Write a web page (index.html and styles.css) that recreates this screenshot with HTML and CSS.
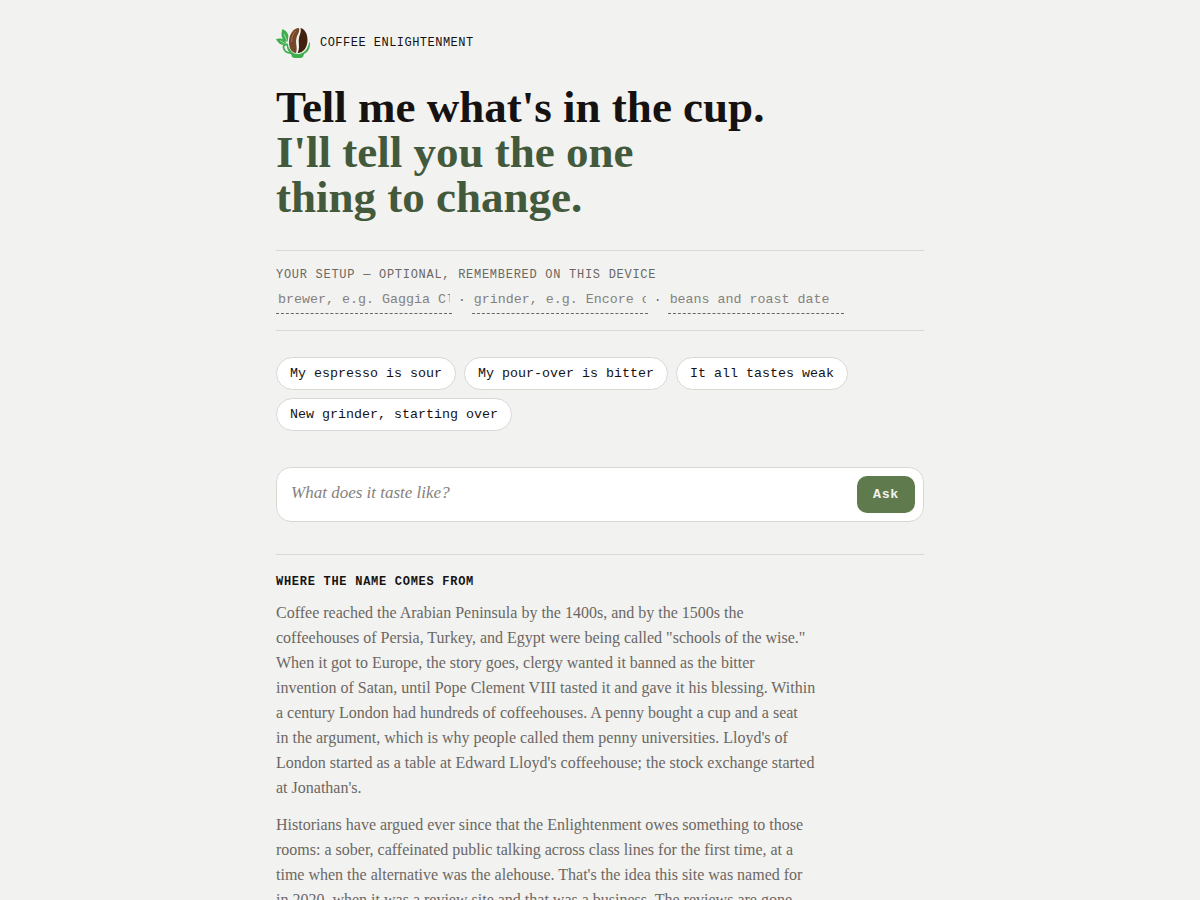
FILE: index.html
```html
<!DOCTYPE html>
<html lang="en">
<head>
<meta charset="utf-8">
<meta name="viewport" content="width=device-width, initial-scale=1">
<title>Coffee Enlightenment</title>
<link rel="stylesheet" href="styles.css">
</head>
<body>
<div class="page">
  <header class="brand">
    <svg class="logo" viewBox="0 0 34 30" aria-hidden="true">
      <path fill="none" stroke="#3fae4d" stroke-width="1.8" d="M12.5 17C8 16 6.500 18 8 21c1 3 4 4 7 4"/>
      <path fill="#3fae4d" d="M11 15c2 7 6 10 12 10 6-1 9-5 10-11l1 1c0 6-2 9-6 11l-1 3c-3 2-8 2-11 0l-1-3c-3-3-5-6-4-11z"/>
      <path fill="#3fae4d" d="M12 14C5 13 4.500 6 6.500 1c5 2 7.500 7 5.500 13zM11 16.500C5 18 2 15 0 11c5-1.500 9 0 11 5.500z"/>
      <path fill="none" stroke="#e3efe2" stroke-width="0.6" d="M8 6l3.500 8M4 12.500l6 3.500"/>
      <path fill="#f2f2f0" d="M22-1c-6 1-11 8-10 16 1 8 5 11 10 11 7 0 11-7 11-14 0-8-4-13-11-13z"/>
      <path fill="#76482a" d="M23 0c-6 0-10 7-10 14 0 7 3 10.500 7 11 2-6-1-9 .5-15C21.500 6 24 4 23 0z"/>
      <path fill="#42210f" d="M24.500 0c4.500 1 7 6 7 12 0 7-4 13-10 13 3-6 .5-9 1.500-15 .8-4 2.500-6 1.500-10z"/>
      <path fill="none" stroke="#a0734c" stroke-width="1" d="M15.500 14c0-5 2-9 4-11"/>
    </svg>
    <span class="brand-name">Coffee Enlightenment</span>
  </header>

  <h1 class="headline">Tell me what's in the cup.<br><span class="headline-answer">I'll tell you the one<br>thing to change.</span></h1>

  <section class="setup" aria-labelledby="setup-label">
    <div class="setup-label" id="setup-label">Your setup — optional, remembered on this device</div>
    <div class="setup-fields">
      <input class="setup-input" type="text" aria-label="Brewer" placeholder="brewer, e.g. Gaggia Classic">
      <span>·</span>
      <input class="setup-input" type="text" aria-label="Grinder" placeholder="grinder, e.g. Encore or Niche">
      <span>·</span>
      <input class="setup-input" type="text" aria-label="Beans" placeholder="beans and roast date">
    </div>
  </section>

  <div class="chips">
    <button class="chip" type="button">My espresso is sour</button>
    <button class="chip" type="button">My pour-over is bitter</button>
    <button class="chip" type="button">It all tastes weak</button>
    <button class="chip" type="button">New grinder, starting over</button>
  </div>

  <form class="composer">
    <textarea class="question" rows="1" aria-label="What does it taste like?" placeholder="What does it taste like?"></textarea>
    <button class="ask" type="button">Ask</button>
  </form>

  <section class="story">
    <h2 class="story-title">Where the name comes from</h2>
    <p>Coffee reached the Arabian Peninsula by the 1400s, and by the 1500s the<br>
    coffeehouses of Persia, Turkey, and Egypt were being called "schools of the wise."<br>
    When it got to Europe, the story goes, clergy wanted it banned as the bitter<br>
    invention of Satan, until Pope Clement VIII tasted it and gave it his blessing. Within<br>
    a century London had hundreds of coffeehouses. A penny bought a cup and a seat<br>
    in the argument, which is why people called them penny universities. Lloyd's of<br>
    London started as a table at Edward Lloyd's coffeehouse; the stock exchange started<br>
    at Jonathan's.</p>
    <p>Historians have argued ever since that the Enlightenment owes something to those<br>
    rooms: a sober, caffeinated public talking across class lines for the first time, at a<br>
    time when the alternative was the alehouse. That's the idea this site was named for<br>
    in 2020, when it was a review site and that was a business. The reviews are gone.</p>
  </section>
</div>
</body>
</html>
```
FILE: styles.css
```css
:root {
  --paper: #f2f2f0;
  --ink: #161211;
  --muted: #6b6763;
  --rule: #d8d8d5;
  --serif: "Liberation Serif", "Times New Roman", serif;
  --mono: "Liberation Mono", "Courier New", monospace;
}

* { box-sizing: border-box; }

body {
  margin: 0;
  background: var(--paper);
  color: var(--ink);
  font-family: var(--serif);
}

.page {
  max-width: 696px;
  margin: 0 auto;
  padding: 28px 24px;
}

.brand {
  display: flex;
  align-items: center;
  gap: 10px;
}

.logo { width: 34px; height: 30px; }

.brand-name {
  font: 12px/16px var(--mono);
  letter-spacing: 0.04em;
  text-transform: uppercase;
}

.headline {
  margin: 27px 0 30px;
  font-size: 45px;
  line-height: 45px;
  font-weight: 700;
}

.headline-answer { color: #43593b; }

.setup {
  padding: 16px 0;
  border-top: 1px solid var(--rule);
  border-bottom: 1px solid var(--rule);
  color: var(--muted);
}

.setup-label {
  margin-bottom: 3px;
  font: 12px/16px var(--mono);
  letter-spacing: 0.06em;
  text-transform: uppercase;
}

.setup-fields {
  display: flex;
  flex-wrap: wrap;
  align-items: center;
  gap: 6px;
  font-family: var(--mono);
  font-size: 13px;
}

.setup-input {
  width: 176px;
  height: 28px;
  padding: 0 2px;
  border: 0;
  border-bottom: 1px dashed var(--muted);
  background: transparent;
  color: var(--ink);
  font-family: var(--mono);
}

.setup-input::placeholder { color: #85817d; }

.chips {
  display: flex;
  flex-wrap: wrap;
  gap: 8px;
  margin: 26px 0 36px;
}

.chip {
  height: 33px;
  padding: 0 13px;
  border: 1px solid var(--rule);
  border-radius: 17px;
  background: #fff;
  color: var(--ink);
  font-family: var(--mono);
}

.composer {
  display: flex;
  align-items: center;
  gap: 8px;
  padding: 8px;
  border: 1px solid var(--rule);
  border-radius: 15px;
  background: #fff;
}

.question {
  flex: 1;
  min-width: 0;
  height: 37px;
  padding: 5px 6px;
  border: 0;
  background: transparent;
  resize: none;
  font: 17px/24px var(--serif);
}

.question::placeholder { color: #85817d; font-style: italic; }

.ask {
  height: 37px;
  padding: 0 16px;
  border: 0;
  border-radius: 10px;
  background: #5f7a4c;
  color: #f2f2f0;
  font-family: var(--mono);
  font-weight: 700;
  letter-spacing: 0.05em;
}

.story {
  margin-top: 32px;
  padding-top: 19px;
  border-top: 1px solid var(--rule);
}

.story-title {
  margin: 0 0 10px;
  font: 700 12px/16px var(--mono);
  letter-spacing: 0.06em;
  text-transform: uppercase;
}

.story p {
  margin: 0 0 12px;
  color: var(--muted);
  font-size: 16px;
  line-height: 25px;
}
```
